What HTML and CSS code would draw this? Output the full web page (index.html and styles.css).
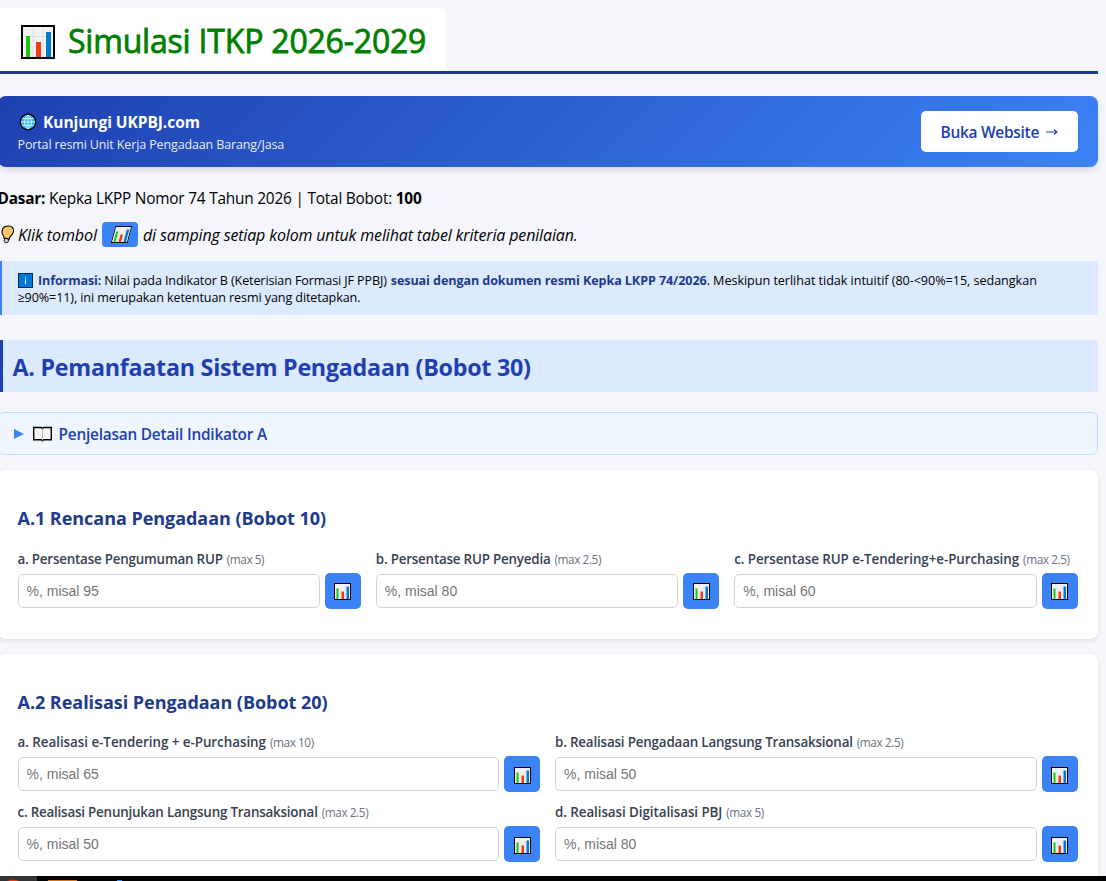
FILE: index.html
```html
<!DOCTYPE html>
<html lang="id">
<head>
  <meta charset="UTF-8">
  <meta name="viewport" content="width=device-width, initial-scale=1.0">
  <title>Simulasi ITKP 2026-2029</title>
  <link rel="stylesheet" href="styles.css">
</head>
<body>
  <!-- shared icon -->
  <svg class="defs" width="0" height="0">
    <symbol id="chart" viewBox="0 0 34 34">
      <rect width="34" height="34" fill="#000"/>
      <rect x="2" y="2" width="30" height="30" fill="#f2f2f2"/>
      <path d="M2 11.5h30M2 21.5h30M12 2v30M22 2v30" stroke="#dfdfdf"/>
      <rect x="5" y="11" width="4" height="21" fill="#16c60c"/>
      <rect x="15" y="17" width="5" height="15" fill="#f03a17"/>
      <rect x="25" y="7" width="5" height="25" fill="#0078d7"/>
    </symbol>
  </svg>

  <div class="container">
    <header>
      <h1><svg class="icon-title"><use href="#chart"/></svg><span>Simulasi ITKP 2026-2029</span></h1>
    </header>

    <div class="banner">
      <div>
        <div class="banner-title">
          <svg class="icon-globe" viewBox="0 0 18 18">
            <circle cx="9" cy="9" r="7.8" fill="#28b4e8" stroke="#000" stroke-width="1.3"/>
            <path d="M9 2v14M2 9h14M3.2 5.6h11.6M3.2 12.4h11.6M9 2C4.500 5.500 4.500 12.500 9 16M9 2c4.500 3.500 4.500 10.500 0 14" fill="none" stroke="#d8f4ff" stroke-width="1"/>
          </svg>
          <span>Kunjungi UKPBJ.com</span>
        </div>
        <div class="banner-sub"><span>Portal resmi Unit Kerja Pengadaan Barang/Jasa</span></div>
      </div>
      <a href="#" class="banner-btn"><span>Buka Website</span> <svg class="arrow" viewBox="0 0 12 8"><path d="M0 4h11M8 1.500l3 2.500-3 2.500" fill="none" stroke="currentColor" stroke-width="1.1"/></svg></a>
    </div>

    <p class="dasar"><span><b>Dasar:</b> Kepka LKPP Nomor 74 Tahun 2026 | Total Bobot: <b>100</b></span></p>

    <p class="hint">
      <svg class="icon-bulb" viewBox="0 0 15 19">
        <path d="M5 12.500l-1 3.500 1.500 2 2.500-.8 1.300-3.400z" fill="#ccc" stroke="#222" stroke-width="1"/>
        <path d="M4 13C4 10 1.500 9.500 2 6 2.500 3 5 1 8.500 1 12.500 1 14 3.500 13.500 6.500 13 10 10 10.500 9 14z" fill="#ffc867" stroke="#000" stroke-width="1.1"/>
      </svg>
      <span class="hint-a">Klik tombol</span>
      <span class="btn-sample"><svg class="icon-chart slanted"><use href="#chart"/></svg></span>
      <span class="hint-b">di samping setiap kolom untuk melihat tabel kriteria penilaian.</span>
    </p>

    <div class="info">
      <div class="info-line"><svg class="icon-info" viewBox="0 0 15 15"><rect x=".5" y=".5" width="14" height="14" fill="#0078d7" stroke="#002b50"/><path d="M7 4h1v1.300H7zM7 6.300h1V11H7z" fill="#fff"/></svg><span class="info-a"><b>Informasi:</b> Nilai pada Indikator B (Keterisian Formasi JF PPBJ)</span> <b class="info-b">sesuai dengan dokumen resmi Kepka LKPP 74/2026</b><span class="info-c">. Meskipun terlihat tidak intuitif (80-&lt;90%=15, sedangkan</span></div>
      <div class="info-line"><span class="info-d">≥90%=11), ini merupakan ketentuan resmi yang ditetapkan.</span></div>
    </div>

    <h2><span>A. Pemanfaatan Sistem Pengadaan (Bobot 30)</span></h2>

    <details>
      <summary>
        <svg class="marker" viewBox="0 0 10 10"><path d="M0 0l10 5-10 5z" fill="#3b82f6"/></svg>
        <svg class="icon-book" viewBox="0 0 19 16">
          <path d="M.7 1.500h7.500l1.300 1 1.300-1h7.500v12.300h-7.500l-1.300 1-1.300-1H.7z" fill="#f5f5f5" stroke="#000" stroke-width="1.400"/>
          <path d="M9.500 2.500v12" stroke="#bbb"/>
        </svg>
        <span>Penjelasan Detail Indikator A</span>
      </summary>
    </details>

    <section class="card">
      <h3><span>A.1 Rencana Pengadaan (Bobot 10)</span></h3>
      <div class="grid three">
        <div class="field">
          <label><span class="name n1">a. Persentase Pengumuman RUP</span><small>(max 5)</small></label>
          <div class="row"><input type="text" placeholder="%, misal 95"><button><svg class="icon-chart"><use href="#chart"/></svg></button></div>
        </div>
        <div class="field">
          <label><span class="name n2">b. Persentase RUP Penyedia</span><small>(max 2.5)</small></label>
          <div class="row"><input type="text" placeholder="%, misal 80"><button><svg class="icon-chart"><use href="#chart"/></svg></button></div>
        </div>
        <div class="field">
          <label><span class="name n3">c. Persentase RUP e-Tendering+e-Purchasing</span><small>(max 2.5)</small></label>
          <div class="row"><input type="text" placeholder="%, misal 60"><button><svg class="icon-chart"><use href="#chart"/></svg></button></div>
        </div>
      </div>
    </section>

    <section class="card">
      <h3><span>A.2 Realisasi Pengadaan (Bobot 20)</span></h3>
      <div class="grid two">
        <div class="field">
          <label><span class="name n4">a. Realisasi e-Tendering + e-Purchasing</span><small>(max 10)</small></label>
          <div class="row"><input type="text" placeholder="%, misal 65"><button><svg class="icon-chart"><use href="#chart"/></svg></button></div>
        </div>
        <div class="field">
          <label><span class="name n5">b. Realisasi Pengadaan Langsung Transaksional</span><small>(max 2.5)</small></label>
          <div class="row"><input type="text" placeholder="%, misal 50"><button><svg class="icon-chart"><use href="#chart"/></svg></button></div>
        </div>
        <div class="field">
          <label><span class="name n6">c. Realisasi Penunjukan Langsung Transaksional</span><small>(max 2.5)</small></label>
          <div class="row"><input type="text" placeholder="%, misal 50"><button><svg class="icon-chart"><use href="#chart"/></svg></button></div>
        </div>
        <div class="field">
          <label><span class="name n7">d. Realisasi Digitalisasi PBJ</span><small>(max 5)</small></label>
          <div class="row"><input type="text" placeholder="%, misal 80"><button><svg class="icon-chart"><use href="#chart"/></svg></button></div>
        </div>
      </div>
    </section>
  </div>

  <div class="taskbar">
    <svg width="140" height="5">
      <rect width="37" height="5" fill="#333"/>
      <path d="M7 5q6-3 12 0z" fill="#e63a10"/>
      <rect x="48" y="4" width="29" height="1" fill="#d9731a"/>
      <rect x="117" y="4" width="5" height="1" fill="#2b8cff"/>
    </svg>
  </div>
</body>
</html>
```

FILE: styles.css
```css
* {
  box-sizing: border-box;
}
html, body {
  height: 100%;
  margin: 0;
  overflow: hidden;
}
body {
  background-color: #f4f6fb;
  color: #000;
  font-family: "Open Sans", "Noto Sans", sans-serif;
  font-size: 16px;
}
.defs {
  position: absolute;
}
svg {
  flex-shrink: 0;
}
span, b, small {
  white-space: nowrap;
}
.container {
  width: 1100px;
  margin-left: -2.5px;
  padding-top: 8px;
}
header {
  height: 66px;
  border-bottom: 3px solid #1e3a8a;
}
h1 {
  display: inline-flex;
  align-items: center;
  width: 448px;
  height: 62px;
  margin: 0;
  padding: 5px 0 0 23.5px;
  border-radius: 5px;
  background-color: #fff;
  color: #008000;
  font-size: 32px;
  font-weight: 400;
  -webkit-text-stroke: 0.8px #008000;
}
h1 span {
  margin: 0 0 2px 13px;
  letter-spacing: -0.2px;
}
.icon-title {
  width: 34px;
  height: 34px;
}
.banner {
  display: flex;
  justify-content: space-between;
  align-items: center;
  height: 71px;
  margin-top: 22px;
  padding: 0 20px;
  border-radius: 8px;
  background: linear-gradient(135deg, #1e40af, #3b82f6);
  box-shadow: 0 4px 6px rgba(0, 0, 0, 0.1);
  color: #fff;
}
.banner-title {
  display: flex;
  align-items: center;
  height: 24px;
  font-size: 15.5px;
  font-weight: 700;
  letter-spacing: -0.05px;
}
.icon-globe {
  width: 18px;
  height: 18px;
  margin: 0 6px 0 1.5px;
}
.banner-sub {
  height: 20px;
  line-height: 22px;
  font-size: 12.5px;
  letter-spacing: -0.13px;
  opacity: 0.9;
}
.banner-btn {
  display: flex;
  align-items: center;
  justify-content: space-between;
  width: 157px;
  height: 41px;
  padding: 0 20px;
  border-radius: 5px;
  background-color: #fff;
  color: #1e40af;
  font-size: 15.5px;
  font-weight: 600;
  letter-spacing: -0.3px;
  text-decoration: none;
}
.arrow {
  width: 12px;
  height: 8px;
}
.dasar {
  height: 24px;
  margin: 19px 0 0;
  line-height: 26px;
  font-size: 15.4px;
  letter-spacing: -0.21px;
}
.hint {
  display: flex;
  align-items: center;
  height: 25px;
  margin: 12px 0 0;
  font-style: italic;
  letter-spacing: -0.15px;
}
.icon-bulb {
  width: 15px;
  height: 19px;
  margin: 0 3px 0 2.5px;
}
.hint-a {
  width: 84px;
  letter-spacing: -0.05px;
}
.btn-sample {
  display: flex;
  align-items: center;
  justify-content: center;
  width: 36px;
  height: 25px;
  margin-right: 5px;
  padding-left: 2px;
  border-radius: 4px;
  background-color: #3b82f6;
}
.icon-chart {
  width: 17px;
  height: 17px;
}
.slanted {
  transform: skewX(-15deg);
}
.info {
  height: 54px;
  margin-top: 14px;
  padding: 11px 16px 9px;
  border-left: 4px solid #3b82f6;
  background-color: #dbeafe;
  font-size: 12.6px;
}
.info-line {
  display: flex;
  align-items: center;
  height: 17px;
  white-space: pre;
}
.info-line b {
  color: #1e3a8a;
}
.icon-info {
  width: 15px;
  height: 15px;
  margin-right: 5.5px;
}
.info-a {
  letter-spacing: -0.13px;
}
.info-b {
  margin-left: 4px;
  letter-spacing: -0.1px;
}
.info-c {
  letter-spacing: -0.04px;
}
.info-d {
  letter-spacing: -0.11px;
}
h2 {
  height: 52px;
  margin: 25px 0 0;
  padding-left: 10px;
  border-left: 5px solid #1e40af;
  background-color: #dbeafe;
  color: #1e40af;
  font-size: 23.3px;
  letter-spacing: -0.27px;
  line-height: 54px;
}
details {
  height: 43px;
  margin-top: 20px;
  border: 1px solid #bfdbfe;
  border-radius: 6px;
  background-color: #eff6ff;
}
summary {
  display: flex;
  align-items: center;
  height: 42px;
  padding-left: 15px;
  color: #1e40af;
  font-size: 15.4px;
  font-weight: 600;
  letter-spacing: -0.22px;
  list-style: none;
}
.marker {
  width: 10px;
  height: 10px;
  margin-right: 9px;
}
.icon-book {
  width: 19px;
  height: 16px;
  margin-right: 7px;
}
.card {
  height: 169px;
  margin-top: 15px;
  padding: 36px 20px 0;
  border-radius: 8px;
  background-color: #fff;
  box-shadow: 0 2px 5px rgba(0, 0, 0, 0.08);
}
.card + .card {
  height: 260px;
}
h3 {
  height: 24px;
  margin: 0 0 19px;
  line-height: 24px;
  color: #1e3a8a;
  font-size: 18px;
  letter-spacing: -0.04px;
}
.card + .card h3 {
  margin-bottom: 18px;
}
.grid {
  display: grid;
  gap: 10px 15px;
}
.three {
  grid-template-columns: repeat(3, 1fr);
}
.two {
  grid-template-columns: repeat(2, 1fr);
}
.field {
  min-width: 0;
}
label {
  display: flex;
  align-items: baseline;
  height: 20px;
  margin-bottom: 4px;
  line-height: 20px;
  color: #374151;
  font-size: 13.4px;
  font-weight: 600;
}
.n1, .n2, .n6 {
  letter-spacing: -0.21px;
}
.n3, .n7 {
  letter-spacing: -0.07px;
}
.n4 {
  letter-spacing: -0.04px;
}
.n5 {
  letter-spacing: -0.18px;
}
small {
  margin-left: 4px;
  color: #6b7280;
  font-size: 11.8px;
  font-weight: 400;
  letter-spacing: -0.42px;
}
.row {
  display: flex;
  align-items: center;
  gap: 5px;
}
input {
  flex: 1;
  min-width: 0;
  height: 34px;
  padding: 0 8px;
  border: 1px solid #d1d5db;
  border-radius: 5px;
  font-family: "Liberation Sans", Arial, sans-serif;
  font-size: 14px;
}
input::placeholder {
  color: #757575;
}
button {
  display: flex;
  align-items: center;
  justify-content: center;
  width: 36px;
  height: 36px;
  padding: 0;
  border: none;
  border-radius: 5px;
  background-color: #3b82f6;
}
.two .icon-chart {
  margin-top: 2px;
}
/* overlaps the bottom of the page */
.taskbar {
  position: fixed;
  left: 0;
  right: 0;
  bottom: 0;
  height: 5px;
  background-color: #000;
}
.taskbar svg {
  display: block;
}
```
